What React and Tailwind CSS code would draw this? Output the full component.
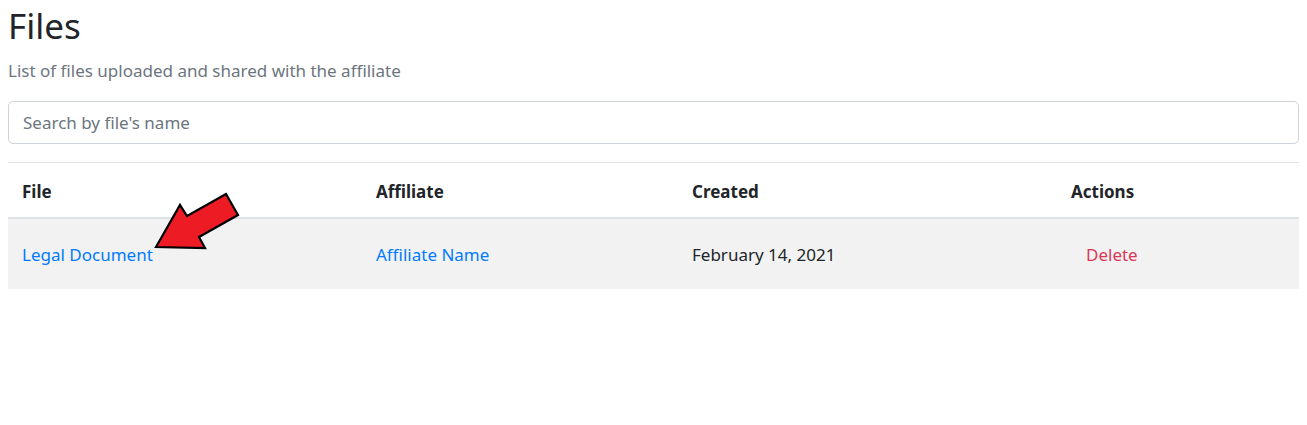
import React from "react"

const cols = "grid grid-cols-[356px_316px_379px_1fr]"

function Arrow() {
  return (
    <svg
      className="absolute left-0 top-0 pointer-events-none"
      width="260"
      height="260"
      viewBox="0 0 260 260"
    >
      <polygon
        points="156,247 180,205 187,216 226,194 238,215 199,237 205,248"
        fill="#ed1c24"
        stroke="#000"
        strokeWidth="2.2"
        strokeLinejoin="miter"
      />
    </svg>
  )
}

export default function App() {
  return (
    <div className="relative min-h-[425px] bg-white px-2 font-['Noto_Sans','Open_Sans',sans-serif] text-[#212529]">
      <h1 className="pt-[2px] text-[35px] leading-[48px] font-normal">Files</h1>
      <p className="mt-[9px] text-[17px] leading-[24px] text-[#6c757d]">
        List of files uploaded and shared with the affiliate
      </p>
      <input
        type="text"
        placeholder="Search by file's name"
        className="mt-[18px] block h-[43px] w-full rounded-[5px] border border-[#ced4da] px-[14px] text-[17px] outline-none placeholder:text-[#6c757d]"
      />

      <div className="mt-[18px] border-t border-[#dee2e6]">
        <div className={`${cols} h-[56px] items-center border-b-2 border-[#dee2e6] pt-[3px] text-[17px] font-bold`}>
          <div className="pl-[14px] pr-3">File</div>
          <div className="px-3">Affiliate</div>
          <div className="px-3">Created</div>
          <div className="px-3">Actions</div>
        </div>
        <div className={`${cols} h-[70px] items-center bg-[#f2f2f2] pt-[2px] text-[17px]`}>
          <div className="pl-[14px] pr-3">
            <a href="#" className="text-[#007bff]">Legal Document</a>
          </div>
          <div className="px-3">
            <a href="#" className="text-[#007bff]">Affiliate Name</a>
          </div>
          <div className="px-3">February 14, 2021</div>
          <div className="px-3">
            <button className="px-[15px] py-[6px] text-[#dc3557]">Delete</button>
          </div>
        </div>
      </div>

      <Arrow />
    </div>
  )
}
